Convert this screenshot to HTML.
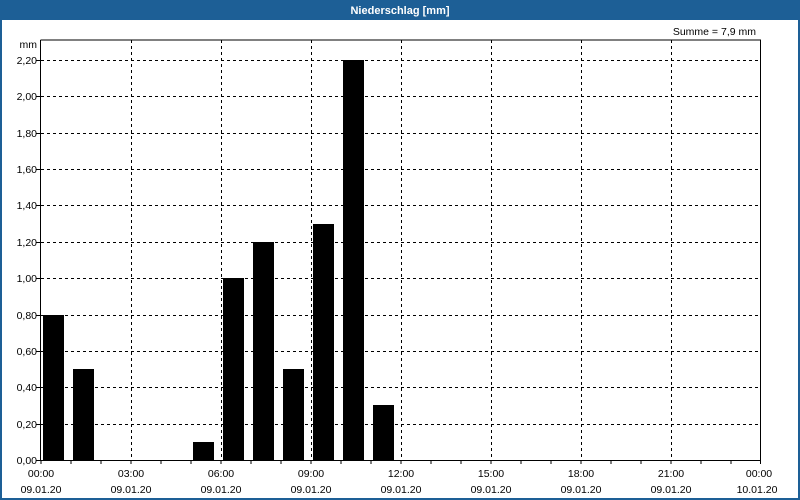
<!DOCTYPE html>
<html><head><meta charset="utf-8"><style>
html,body{margin:0;padding:0;background:#fff;}
svg{display:block;font-family:"Liberation Sans","DejaVu Sans",sans-serif;}
</style></head><body>
<svg width="800" height="500" xmlns="http://www.w3.org/2000/svg">
<rect x="0" y="0" width="800" height="500" fill="#1d5f96"/>
<rect x="2" y="20" width="796" height="478" fill="#fff"/>
<text x="400" y="14" fill="#fff" font-size="11" font-weight="bold" text-anchor="middle">Niederschlag [mm]</text>
<text x="756" y="35" fill="#000" font-size="10.5" text-anchor="end">Summe = 7,9 mm</text>
<g stroke="#000" stroke-width="1" stroke-dasharray="3,3" fill="none">
<path d="M41 60.5H760M41 96.5H760M41 133.5H760M41 169.5H760M41 205.5H760M41 242.5H760M41 278.5H760M41 315.5H760M41 351.5H760M41 387.5H760M41 424.5H760"/>
<path d="M131.5 40V460M221.5 40V460M311.5 40V460M401.5 40V460M491.5 40V460M581.5 40V460M671.5 40V460"/>
</g>
<g fill="#000">
<rect x="43" y="315" width="21" height="145"/>
<rect x="73" y="369" width="21" height="91"/>
<rect x="193" y="442" width="21" height="18"/>
<rect x="223" y="278" width="21" height="182"/>
<rect x="253" y="242" width="21" height="218"/>
<rect x="283" y="369" width="21" height="91"/>
<rect x="313" y="224" width="21" height="236"/>
<rect x="343" y="60" width="21" height="400"/>
<rect x="373" y="405" width="21" height="55"/>
</g>
<path d="M40.5 40V460.5H760.5V40H40.5" stroke="#000" fill="none"/>
<g stroke="#000">
<path d="M41 460v4M71 460v4M101 460v4M131 460v4M161 460v4M191 460v4M221 460v4M251 460v4M281 460v4M311 460v4M341 460v4M371 460v4M401 460v4M431 460v4M461 460v4M491 460v4M521 460v4M551 460v4M581 460v4M611 460v4M641 460v4M671 460v4M701 460v4M731 460v4M760.5 460v4"/>
<path d="M36 60.5h5M36 96.5h5M36 133.5h5M36 169.5h5M36 205.5h5M36 242.5h5M36 278.5h5M36 315.5h5M36 351.5h5M36 387.5h5M36 424.5h5M36 460.5h5"/>
</g>
<g font-size="10.5" fill="#000" text-anchor="end">
<text x="37" y="48">mm</text>
<text x="37" y="64">2,20</text>
<text x="37" y="100">2,00</text>
<text x="37" y="137">1,80</text>
<text x="37" y="173">1,60</text>
<text x="37" y="209">1,40</text>
<text x="37" y="246">1,20</text>
<text x="37" y="282">1,00</text>
<text x="37" y="319">0,80</text>
<text x="37" y="355">0,60</text>
<text x="37" y="391">0,40</text>
<text x="37" y="428">0,20</text>
<text x="37" y="464">0,00</text>
</g>
<g font-size="10.5" fill="#000" text-anchor="middle">
<text x="41" y="477">00:00</text><text x="41" y="493">09.01.20</text>
<text x="131" y="477">03:00</text><text x="131" y="493">09.01.20</text>
<text x="221" y="477">06:00</text><text x="221" y="493">09.01.20</text>
<text x="311" y="477">09:00</text><text x="311" y="493">09.01.20</text>
<text x="401" y="477">12:00</text><text x="401" y="493">09.01.20</text>
<text x="491" y="477">15:00</text><text x="491" y="493">09.01.20</text>
<text x="581" y="477">18:00</text><text x="581" y="493">09.01.20</text>
<text x="671" y="477">21:00</text><text x="671" y="493">09.01.20</text>
<text x="759" y="477">00:00</text><text x="757" y="493">10.01.20</text>
</g>
</svg>
</body></html>
